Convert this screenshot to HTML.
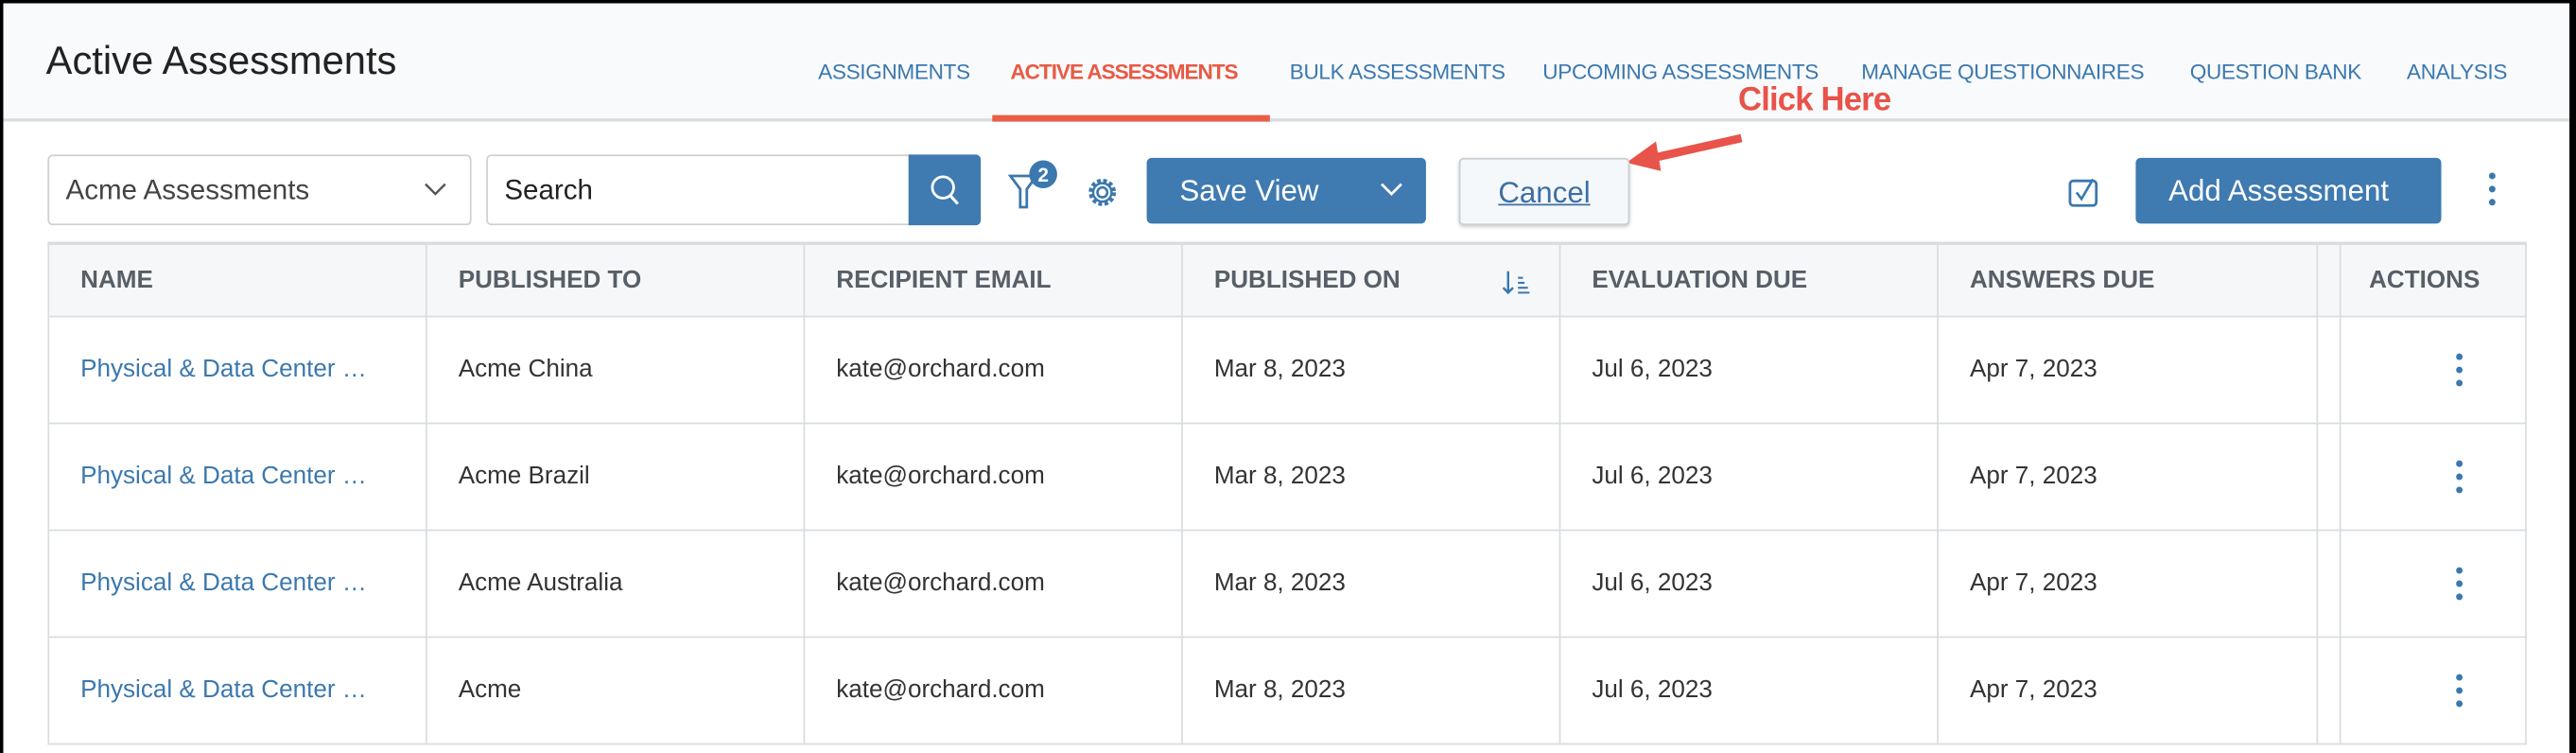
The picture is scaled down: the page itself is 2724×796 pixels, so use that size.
<!DOCTYPE html>
<html><head><meta charset="utf-8"><style>
*{box-sizing:border-box;margin:0;padding:0}
html,body{width:2724px;height:796px;overflow:hidden;background:#000}
#s{position:absolute;left:0;top:0;width:1568px;height:458px;transform:scale(1.73724,1.73799);transform-origin:0 0;font-family:"Liberation Sans",sans-serif;}
#page{position:absolute;left:2px;top:2px;width:1562px;height:456px;background:#fff;overflow:hidden}
.hdr{position:absolute;left:0;top:0;width:100%;height:72px;background:#f9fafb;border-bottom:2px solid #d9dde0}
.t{position:absolute;left:26px;top:22px;font-size:24px;color:#222}
.tab{position:absolute;top:34px;font-size:13px;color:#3b78ae;letter-spacing:-0.2px;white-space:nowrap}
.ab{position:absolute;left:602px;top:68px;width:169px;height:4px;background:#e85e47}
.box{position:absolute;border:1px solid #ccd1d5;border-radius:3px;background:#fff;font-size:17px;color:#333}
.btn{position:absolute;background:#3f7ab0;border-radius:3px;color:#fff;font-size:18px}
table{position:absolute;left:27px;top:145px;border-collapse:collapse;width:1509px;font-size:15px}
td,th{border:1px solid #d9dde0;height:65px;padding:0 0 0 19px;text-align:left;color:#333;white-space:nowrap}
th{height:44px;background:#f6f7f8;color:#575f68;font-weight:bold;font-size:15px;border-top:2px solid #d9dde0}
td.n{color:#3b78ae}
.dots{position:absolute;width:4px}
.dots i{display:block;width:4px;height:4px;border-radius:2px;background:#3b78ae;margin-bottom:4px}
</style></head><body><div id="s"><div id="page">
<div class="hdr">
<div class="t">Active Assessments</div>
<div class="tab" style="left:496px">ASSIGNMENTS</div>
<div class="tab" style="left:613px;color:#e85a45;font-weight:bold;letter-spacing:-0.6px">ACTIVE ASSESSMENTS</div>
<div class="tab" style="left:783px">BULK ASSESSMENTS</div>
<div class="tab" style="left:937px">UPCOMING ASSESSMENTS</div>
<div class="tab" style="left:1131px">MANAGE QUESTIONNAIRES</div>
<div class="tab" style="left:1331px">QUESTION BANK</div>
<div class="tab" style="left:1463px">ANALYSIS</div>
<div class="ab"></div>
<div style="position:absolute;left:1056px;top:48px;font-size:20px;font-weight:bold;color:#e8534a;letter-spacing:-0.5px">Click Here</div>
</div>
<svg style="position:absolute;left:980px;top:76px" width="90" height="30"><path d="M78 6 L20 19" stroke="#e8534a" stroke-width="5" fill="none"/><path d="M8 21 L26 8 L29 26 Z" fill="#e8534a"/></svg>
<div class="box" style="left:27px;top:92px;width:258px;height:43px;padding:11px 0 0 10px;color:#444">Acme Assessments<svg style="position:absolute;right:14px;top:16px" width="14" height="9"><path d="M1 1 L7 7 L13 1" stroke="#555" stroke-width="1.4" fill="none"/></svg></div>
<div class="box" style="left:294px;top:92px;width:262px;height:43px;padding:11px 0 0 10px;color:#222">Search</div>
<div class="btn" style="left:551px;top:92px;width:44px;height:43px;border-radius:0 3px 3px 0"><svg width="44" height="43"><circle cx="21" cy="20" r="6.5" stroke="#fff" stroke-width="1.6" fill="none"/><path d="M25.5 25 L30 30" stroke="#fff" stroke-width="1.8"/></svg></div>
<svg style="position:absolute;left:610px;top:94px" width="40" height="36"><path d="M3 11 H19 L13 19 V30 H9 V19 Z" stroke="#3b78ae" stroke-width="1.6" fill="none"/><circle cx="23" cy="10" r="8.5" fill="#3b78ae"/><text x="23" y="14.5" fill="#fff" font-size="12" font-weight="bold" text-anchor="middle" font-family="Liberation Sans">2</text></svg>
<svg style="position:absolute;left:658px;top:104px" width="22" height="22"><circle cx="11" cy="11" r="3" stroke="#3b78ae" stroke-width="1.5" fill="none"/><circle cx="11" cy="11" r="7" stroke="#3b78ae" stroke-width="2.6" stroke-dasharray="2.2 1.5" fill="none"/><circle cx="11" cy="11" r="5.6" stroke="#3b78ae" stroke-width="1.4" fill="none"/></svg>
<div class="btn" style="left:696px;top:94px;width:170px;height:40px;padding:10px 0 0 20px">Save View<svg style="position:absolute;right:14px;top:15px" width="14" height="9"><path d="M1 1 L7 7 L13 1" stroke="#fff" stroke-width="1.6" fill="none"/></svg></div>
<div style="position:absolute;left:886px;top:94px;width:104px;height:41px;border:1px solid #c9ced2;border-radius:3px;background:#f5f8fb;box-shadow:0 1px 2px rgba(0,0,0,.2);text-align:center;padding-top:10px;font-size:18px;color:#3b6fa3;text-decoration:underline">Cancel</div>
<svg style="position:absolute;left:1256px;top:104px" width="22" height="22"><rect x="2" y="4" width="16" height="15" rx="2" stroke="#3b78ae" stroke-width="1.6" fill="none"/><path d="M6 11 L9 15 L16 3" stroke="#3b78ae" stroke-width="1.5" fill="none"/></svg>
<div class="btn" style="left:1298px;top:94px;width:186px;height:40px;padding:10px 0 0 20px">Add Assessment</div>
<div class="dots" style="left:1513px;top:103px"><i></i><i></i><i></i></div>
<table>
<tr><th style="width:230px">NAME</th><th style="width:230px">PUBLISHED TO</th><th style="width:230px">RECIPIENT EMAIL</th><th style="width:230px;position:relative">PUBLISHED ON<svg style="position:absolute;left:194px;top:15px" width="18" height="16"><path d="M4 1 V14 M1 11 L4 14 L7 11" stroke="#3b78ae" stroke-width="1.4" fill="none"/><path d="M10 5 H13 M10 8 H14 M10 11 H16 M10 14 H17" stroke="#3b78ae" stroke-width="1.2"/></svg></th><th style="width:230px">EVALUATION DUE</th><th style="width:231px">ANSWERS DUE</th><th style="width:14px;padding:0"></th><th style="padding-left:17px">ACTIONS</th></tr>
<tr><td class="n">Physical &amp; Data Center …</td><td>Acme China</td><td>kate@orchard.com</td><td>Mar 8, 2023</td><td>Jul 6, 2023</td><td>Apr 7, 2023</td><td style="padding:0"></td><td style="position:relative"><div class="dots" style="left:70px;top:22px"><i></i><i></i><i></i></div></td></tr>
<tr><td class="n">Physical &amp; Data Center …</td><td>Acme Brazil</td><td>kate@orchard.com</td><td>Mar 8, 2023</td><td>Jul 6, 2023</td><td>Apr 7, 2023</td><td style="padding:0"></td><td style="position:relative"><div class="dots" style="left:70px;top:22px"><i></i><i></i><i></i></div></td></tr>
<tr><td class="n">Physical &amp; Data Center …</td><td>Acme Australia</td><td>kate@orchard.com</td><td>Mar 8, 2023</td><td>Jul 6, 2023</td><td>Apr 7, 2023</td><td style="padding:0"></td><td style="position:relative"><div class="dots" style="left:70px;top:22px"><i></i><i></i><i></i></div></td></tr>
<tr><td class="n">Physical &amp; Data Center …</td><td>Acme</td><td>kate@orchard.com</td><td>Mar 8, 2023</td><td>Jul 6, 2023</td><td>Apr 7, 2023</td><td style="padding:0"></td><td style="position:relative"><div class="dots" style="left:70px;top:22px"><i></i><i></i><i></i></div></td></tr>
</table>
</div></div></body></html>
